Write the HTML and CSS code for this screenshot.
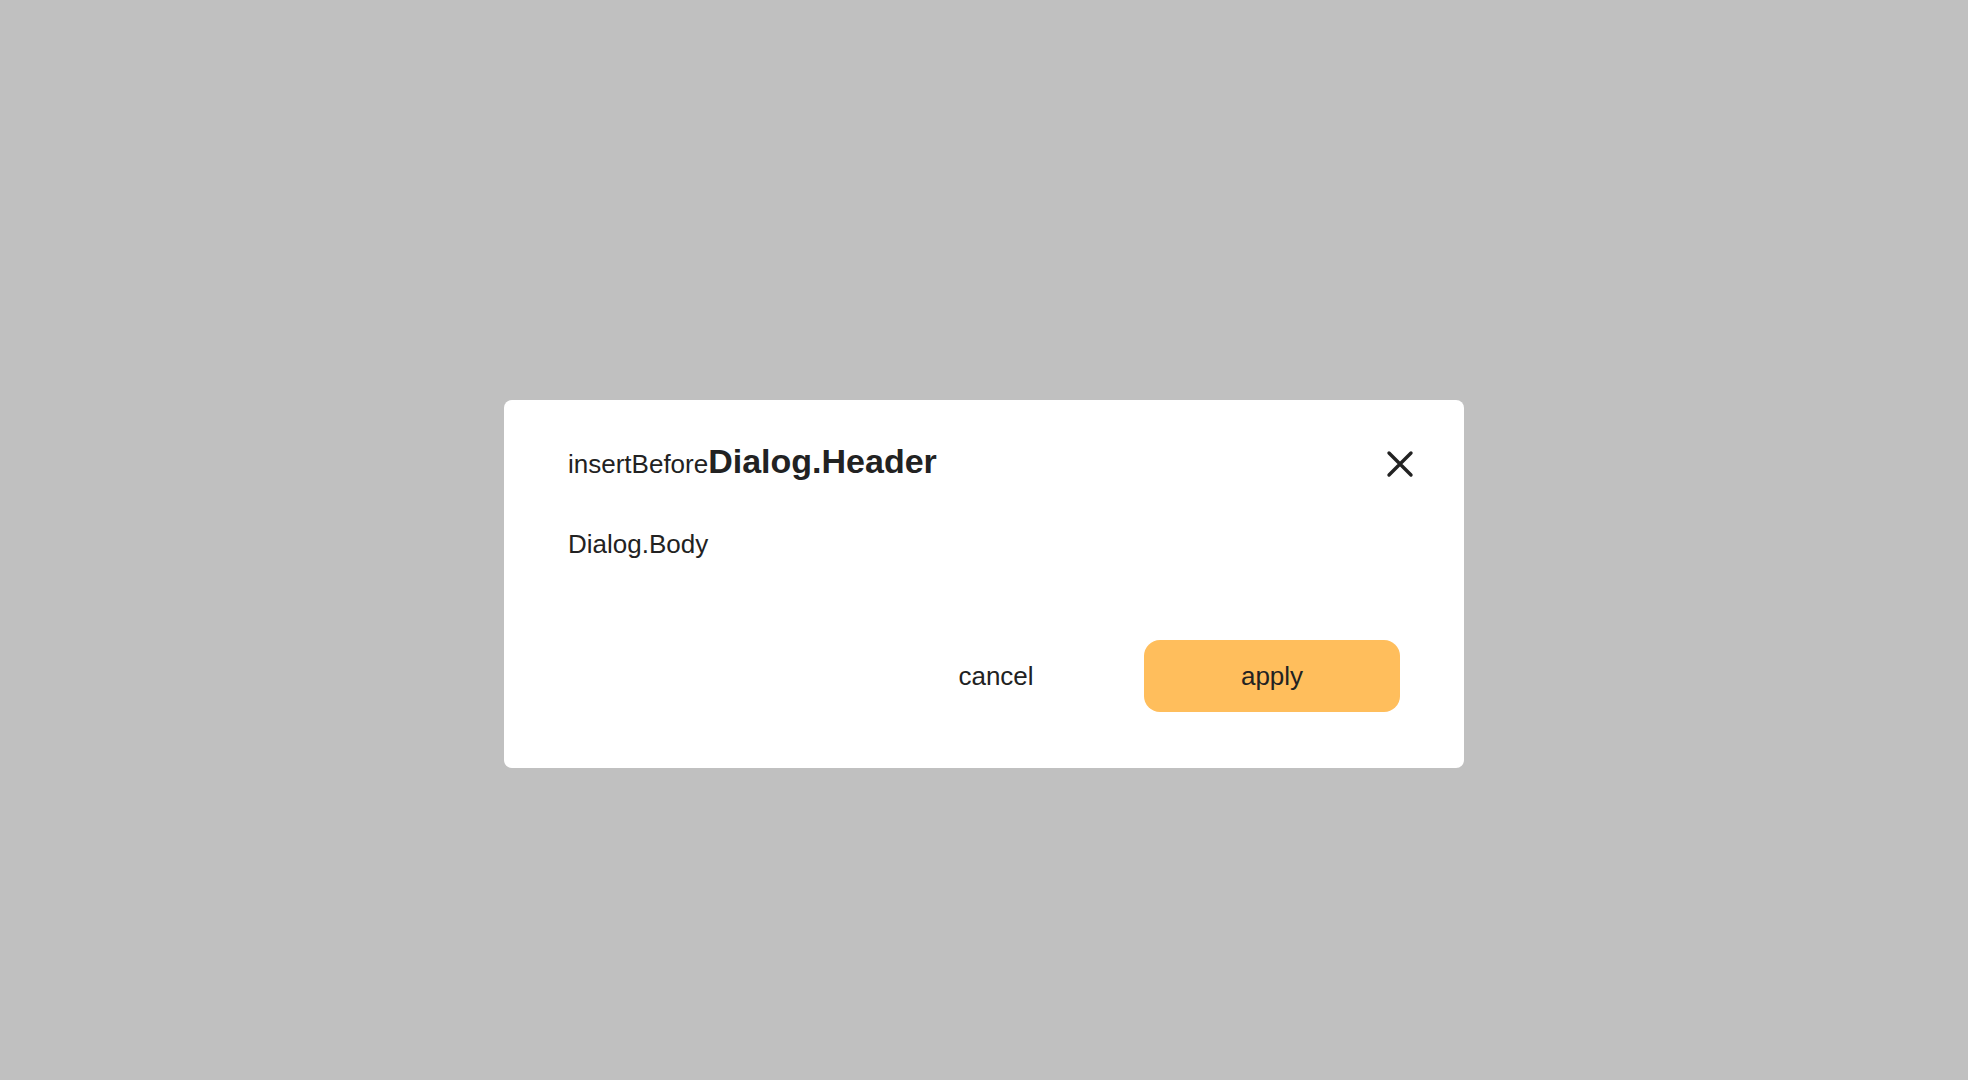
FILE: index.html
```html
<!DOCTYPE html>
<html lang="en">
<head>
<meta charset="utf-8">
<title>Dialog</title>
<link rel="stylesheet" href="styles.css">
</head>
<body>
<div class="overlay">
  <div class="dialog" role="dialog">
    <div class="dialog-header">
      <div class="dialog-title"><span class="title-pre">insertBefore</span><span class="title-main">Dialog.Header</span></div>
      <button class="close-btn" aria-label="close">
        <svg width="32" height="32" viewBox="0 0 32 32"><path d="M5 5 L27 27 M27 5 L5 27" stroke="#222" stroke-width="3.4" stroke-linecap="round" fill="none"/></svg>
      </button>
    </div>
    <div class="dialog-body">Dialog.Body</div>
    <div class="dialog-footer">
      <button class="btn btn-cancel">cancel</button>
      <button class="btn btn-apply">apply</button>
    </div>
  </div>
</div>
</body>
</html>
```

FILE: styles.css
```css
html, body {
  margin: 0;
  padding: 0;
  height: 100%;
}
body {
  background: #c0c0c0;
  font-family: "Liberation Sans", Arial, sans-serif;
  color: #222222;
}
.overlay {
  display: flex;
  justify-content: center;
  align-items: flex-start;
  padding-top: 400px;
}
.dialog {
  width: 960px;
  box-sizing: border-box;
  background: #ffffff;
  border-radius: 8px;
  padding: 37px 64px 56px;
}
.dialog-header {
  display: flex;
  align-items: center;
  justify-content: space-between;
  min-height: 48px;
}
.dialog-title {
  line-height: normal;
}
.title-pre {
  font-size: 26px;
}
.title-main {
  font-size: 34px;
  font-weight: bold;
}
.close-btn {
  width: 32px;
  height: 32px;
  padding: 0;
  margin: 6px -16px 0 0;
  border: none;
  background: none;
  display: flex;
  align-items: center;
  justify-content: center;
  cursor: pointer;
}
.close-btn svg {
  width: 32px;
  height: 32px;
}
.dialog-body {
  padding-top: 44px;
  font-size: 26px;
  line-height: normal;
}
.dialog-footer {
  display: flex;
  justify-content: flex-end;
  gap: 20px;
  margin-top: 80px;
}
.btn {
  width: 256px;
  height: 72px;
  border: none;
  border-radius: 16px;
  font-family: "Liberation Sans", Arial, sans-serif;
  font-size: 26px;
  color: #222222;
  cursor: pointer;
  padding: 0;
}
.btn-cancel {
  background: transparent;
}
.btn-apply {
  background: #ffbe5c;
}
```
